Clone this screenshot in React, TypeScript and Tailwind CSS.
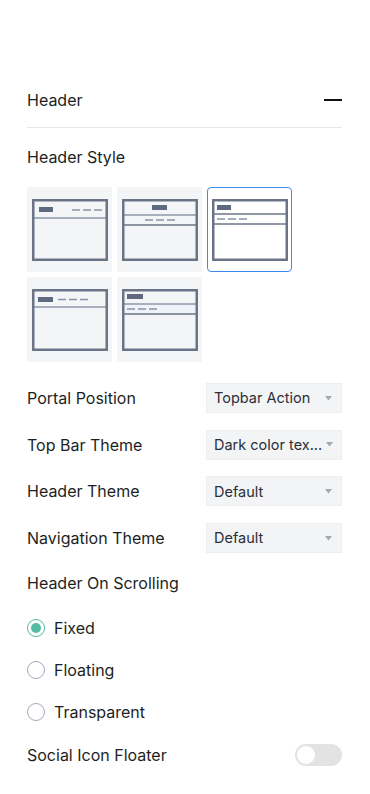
import { useState } from 'react';

type Layout = 'left' | 'center' | 'stacked' | 'inline' | 'band';

const layouts: Layout[] = ['left', 'center', 'stacked', 'inline', 'band'];

function HeaderPreview({ layout }: { layout: Layout }) {
  const frame = '#6b7487';
  const line = '#8e97a8';
  const logo = '#5f6a80';
  const dash = '#8a93a5';

  const dashes = (x: number, y: number) => (
    <g stroke={dash} strokeWidth="1.5">
      <line x1={x} y1={y} x2={x + 8} y2={y} />
      <line x1={x + 11} y1={y} x2={x + 19} y2={y} />
      <line x1={x + 22} y1={y} x2={x + 30} y2={y} />
    </g>
  );

  return (
    <svg width="76" height="62" viewBox="0 0 76 62">
      {layout === 'band' && <rect x="1" y="15" width="74" height="10" fill="#eef3fa" />}
      {layout === 'left' && (
        <>
          <line x1="1" y1="19" x2="75" y2="19" stroke={line} strokeWidth="1.5" />
          <rect x="7" y="8" width="14" height="5" fill={logo} />
          {dashes(40, 11)}
        </>
      )}
      {layout === 'center' && (
        <>
          <line x1="1" y1="16" x2="75" y2="16" stroke={line} strokeWidth="1.5" />
          <line x1="1" y1="26" x2="75" y2="26" stroke={frame} strokeWidth="1.5" />
          <rect x="30" y="6" width="15" height="5" fill={logo} />
          {dashes(23, 21)}
        </>
      )}
      {layout === 'stacked' && (
        <>
          <line x1="1" y1="15" x2="75" y2="15" stroke={frame} strokeWidth="1.5" />
          <line x1="1" y1="25" x2="75" y2="25" stroke={frame} strokeWidth="1.5" />
          <rect x="5" y="6" width="14" height="5" fill={logo} />
          {dashes(5, 20)}
        </>
      )}
      {layout === 'inline' && (
        <>
          <line x1="1" y1="18" x2="75" y2="18" stroke={line} strokeWidth="1.5" />
          <rect x="6" y="8" width="15" height="5" fill={logo} />
          {dashes(26, 10.5)}
        </>
      )}
      {layout === 'band' && (
        <>
          <line x1="1" y1="15" x2="75" y2="15" stroke={line} strokeWidth="1.5" />
          <line x1="1" y1="25" x2="75" y2="25" stroke={frame} strokeWidth="1.5" />
          <rect x="5" y="5" width="16" height="5" fill={logo} />
          {dashes(5, 20)}
        </>
      )}
      <rect x="1.25" y="1.25" width="73.5" height="59.5" fill="none" stroke={frame} strokeWidth="2.5" />
    </svg>
  );
}

function Select({ value }: { value: string }) {
  return (
    <div className="w-[136px] h-[30px] flex items-center justify-between pl-[7px] pr-[9px] bg-[#f3f4f6] border border-[#eceef1] text-[14.5px] text-[#2b2f36]">
      <span className="whitespace-nowrap">{value}</span>
      <svg width="7" height="5" viewBox="0 0 7 5" className="ml-1 shrink-0">
        <path d="M0 0 L7 0 L3.5 4.5 Z" fill="#a3a9b3" />
      </svg>
    </div>
  );
}

export default function App() {
  const [style, setStyle] = useState<Layout>('stacked');
  const [scroll, setScroll] = useState('Fixed');
  const [floater, setFloater] = useState(false);

  const selects = [
    { label: 'Portal Position', value: 'Topbar Action' },
    { label: 'Top Bar Theme', value: 'Dark color tex...' },
    { label: 'Header Theme', value: 'Default' },
    { label: 'Navigation Theme', value: 'Default' },
  ];

  return (
    <div
      className="w-[370px] min-h-[794px] bg-white pt-[88px] pl-[27px] pr-[28px] text-[16px] text-[#1d1f23]"
      style={{ fontFamily: 'Inter, "Noto Sans", sans-serif' }}
    >
      {/* Section header */}
      <div className="h-6 flex items-center justify-between">
        <span>Header</span>
        <span className="w-[18px] h-[2px] bg-[#111]" />
      </div>
      <div className="mt-[15px] h-px bg-[#e4e6ea]" />

      <div className="mt-[17px] h-6 flex items-center">Header Style</div>

      <div className="mt-[18px] grid grid-cols-[85px_85px_85px] gap-[5px]">
        {layouts.map((l) => (
          <button
            key={l}
            onClick={() => setStyle(l)}
            className={
              style === l
                ? 'w-[85px] h-[85px] flex items-center justify-center bg-white border border-[#3d8df0] rounded-[4px]'
                : 'w-[85px] h-[85px] flex items-center justify-center bg-[#f4f5f7]'
            }
          >
            <HeaderPreview layout={l} />
          </button>
        ))}
      </div>

      <div className="mt-[21px] flex flex-col gap-[16.7px]">
        {selects.map((s) => (
          <div key={s.label} className="h-[30px] flex items-center justify-between">
            <span>{s.label}</span>
            <Select value={s.value} />
          </div>
        ))}
      </div>

      <div className="mt-[18px] h-6 flex items-center">Header On Scrolling</div>

      <div className="mt-[23px] flex flex-col gap-[22px]">
        {['Fixed', 'Floating', 'Transparent'].map((opt) => (
          <button key={opt} onClick={() => setScroll(opt)} className="h-5 flex items-center gap-[9px] text-left">
            {scroll === opt ? (
              <span className="w-[18px] h-[18px] rounded-full border-[1.5px] border-[#52bba3] flex items-center justify-center">
                <span className="w-[10px] h-[10px] rounded-full bg-[#52bba3]" />
              </span>
            ) : (
              <span className="w-[18px] h-[18px] rounded-full border-[1.5px] border-[#a0aabb]" />
            )}
            <span>{opt}</span>
          </button>
        ))}
      </div>

      <div className="mt-[21px] h-6 flex items-center justify-between">
        <span>Social Icon Floater</span>
        <button
          onClick={() => setFloater(!floater)}
          className={
            floater
              ? 'w-[47px] h-[22px] rounded-full bg-[#52bba3] flex items-center justify-end px-[2px]'
              : 'w-[47px] h-[22px] rounded-full bg-[#e3e3e3] flex items-center px-[2px]'
          }
        >
          <span className="w-[18px] h-[18px] rounded-full bg-white" />
        </button>
      </div>
    </div>
  );
}
